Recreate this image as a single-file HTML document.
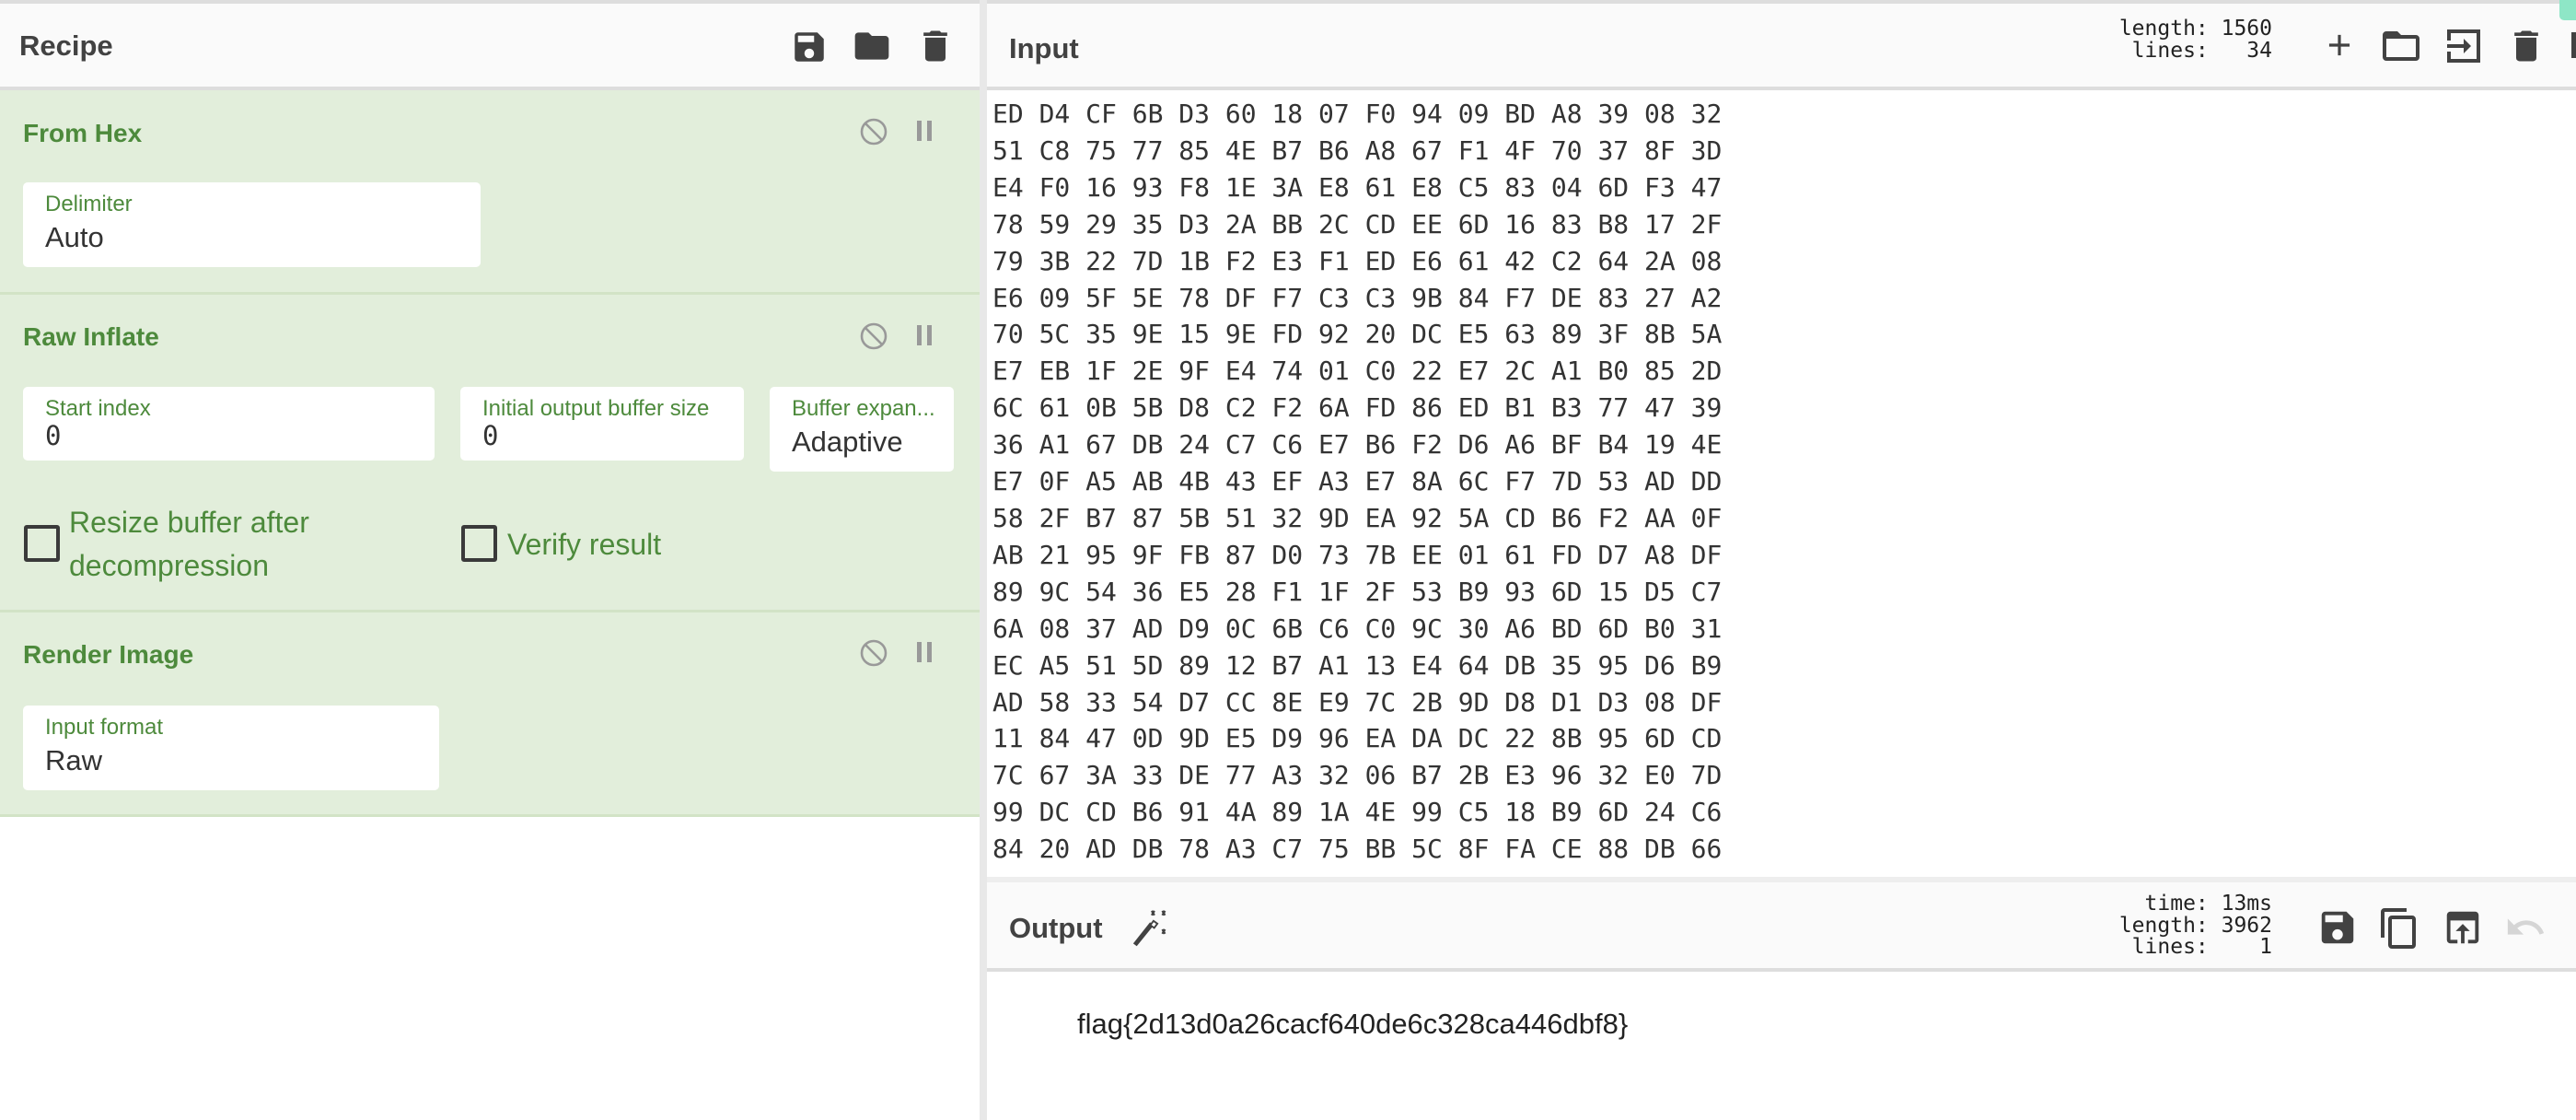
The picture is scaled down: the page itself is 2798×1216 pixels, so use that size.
<!DOCTYPE html>
<html><head><meta charset="utf-8">
<style>
*{margin:0;padding:0;box-sizing:border-box}
body{width:2798px;height:1216px;position:relative;overflow:hidden;background:#fff;font-family:"Liberation Sans",sans-serif;color:#424242}
.a{position:absolute}
.hdr{background:#fafafa;border-top:4px solid #ddd;border-bottom:4px solid #ddd}
.title{font-weight:bold;font-size:31px;color:#424242}
.green{background:#e2eedb}
.sec{border-bottom:3px solid #d2e3c6}
.stitle{font-weight:bold;font-size:28px;color:#4d8a3c}
.box{background:#fff;border-radius:5px}
.lbl{font-size:24px;color:#4d8a3c;position:absolute;left:24px;top:10px;white-space:nowrap}
.val{font-size:31px;color:#333;position:absolute;left:24px;top:42px}
.mono{font-family:"DejaVu Sans Mono","Liberation Mono",monospace}
.hex{font-size:28px;line-height:39.9px;color:#333;white-space:pre}
.stat{font-size:23px;line-height:23.5px;text-align:right;white-space:pre;color:#222}
svg.i{position:absolute;fill:#424242}
</style></head><body>

<!-- left panel -->
<div class="a hdr" style="left:0;top:0;width:1064px;height:98px"></div>
<div class="a title" style="left:21px;top:32px">Recipe</div>
<svg class="i" viewBox="0 0 24 24" style="left:858px;top:30px;width:42px;height:42px"><path d="M17 3H5a2 2 0 0 0-2 2v14a2 2 0 0 0 2 2h14a2 2 0 0 0 2-2V7l-4-4zm-5 16a3 3 0 1 1 0-6 3 3 0 0 1 0 6zm3-10H5V5h10v4z"/></svg>
<svg class="i" viewBox="0 0 24 24" style="left:925px;top:28px;width:44px;height:44px"><path d="M10 4H4a2 2 0 0 0-2 2v12a2 2 0 0 0 2 2h16a2 2 0 0 0 2-2V8a2 2 0 0 0-2-2h-8l-2-2z"/></svg>
<svg class="i" viewBox="0 0 24 24" style="left:994px;top:28px;width:44px;height:44px"><path d="M6 19a2 2 0 0 0 2 2h8a2 2 0 0 0 2-2V7H6v12zM19 4h-3.5l-1-1h-5l-1 1H5v2h14V4z"/></svg>

<div class="a green sec" style="left:0;top:98px;width:1064px;height:222px"></div>
<div class="a stitle" style="left:25px;top:129px">From Hex</div>
<div class="a box" style="left:25px;top:198px;width:497px;height:92px"><div class="lbl">Delimiter</div><div class="val">Auto</div></div>

<div class="a green sec" style="left:0;top:320px;width:1064px;height:345px"></div>
<div class="a stitle" style="left:25px;top:350px">Raw Inflate</div>
<div class="a box" style="left:25px;top:420px;width:447px;height:80px"><div class="lbl">Start index</div><div class="val mono" style="font-size:29px;top:36px">0</div></div>
<div class="a box" style="left:500px;top:420px;width:308px;height:80px"><div class="lbl">Initial output buffer size</div><div class="val mono" style="font-size:29px;top:36px">0</div></div>
<div class="a box" style="left:836px;top:420px;width:200px;height:92px"><div class="lbl">Buffer expan...</div><div class="val">Adaptive</div></div>
<div class="a" style="left:26px;top:570px;width:39px;height:40px;border:4px solid #3a3a3a;border-radius:3px"></div>
<div class="a" style="left:75px;top:544px;font-size:32px;line-height:47px;color:#4d8a3c">Resize buffer after<br>decompression</div>
<div class="a" style="left:501px;top:570px;width:39px;height:40px;border:4px solid #3a3a3a;border-radius:3px"></div>
<div class="a" style="left:551px;top:568px;font-size:32px;line-height:47px;color:#4d8a3c">Verify result</div>

<div class="a green sec" style="left:0;top:665px;width:1064px;height:222px"></div>
<div class="a stitle" style="left:25px;top:695px">Render Image</div>
<div class="a box" style="left:25px;top:766px;width:452px;height:92px"><div class="lbl">Input format</div><div class="val">Raw</div></div>

<!-- disable / pause icons -->
<svg class="a" viewBox="0 0 32 32" style="left:933px;top:126px;width:32px;height:34px" fill="none" stroke="#999" stroke-width="2.6"><circle cx="16" cy="16" r="13"/><path d="M7 7l18 18"/></svg>
<div class="a" style="left:996px;top:131px;width:5px;height:22px;background:#999"></div><div class="a" style="left:1007px;top:131px;width:5px;height:22px;background:#999"></div>
<svg class="a" viewBox="0 0 32 32" style="left:933px;top:348px;width:32px;height:34px" fill="none" stroke="#999" stroke-width="2.6"><circle cx="16" cy="16" r="13"/><path d="M7 7l18 18"/></svg>
<div class="a" style="left:996px;top:353px;width:5px;height:22px;background:#999"></div><div class="a" style="left:1007px;top:353px;width:5px;height:22px;background:#999"></div>
<svg class="a" viewBox="0 0 32 32" style="left:933px;top:692px;width:32px;height:34px" fill="none" stroke="#999" stroke-width="2.6"><circle cx="16" cy="16" r="13"/><path d="M7 7l18 18"/></svg>
<div class="a" style="left:996px;top:697px;width:5px;height:22px;background:#999"></div><div class="a" style="left:1007px;top:697px;width:5px;height:22px;background:#999"></div>

<!-- divider -->
<div class="a" style="left:1064px;top:0;width:8px;height:1216px;background:#e8e8e8"></div>

<!-- input -->
<div class="a hdr" style="left:1072px;top:0;width:1726px;height:98px"></div>
<div class="a title" style="left:1096px;top:35px">Input</div>
<div class="a stat mono" style="left:2200px;top:20px;width:268px">length: 1560
 lines:   34</div>
<svg class="i" viewBox="0 0 24 24" style="left:2522px;top:30px;width:38px;height:38px"><path d="M19 13h-6v6h-2v-6H5v-2h6V5h2v6h6v2z"/></svg>
<svg class="i" viewBox="0 0 24 24" style="left:2584px;top:26px;width:48px;height:48px"><path d="M20 6h-8l-2-2H4a2 2 0 0 0-2 2v12a2 2 0 0 0 2 2h16a2 2 0 0 0 2-2V8a2 2 0 0 0-2-2zm0 12H4V8h16v10z"/></svg>
<svg class="i" viewBox="0 0 24 24" style="left:2652px;top:26px;width:48px;height:48px"><path d="M3 3h18v18H3v-6h2v4h14V5H5v4H3zM3 11h9V8l4 4-4 4v-3H3z"/></svg>
<svg class="i" viewBox="0 0 24 24" style="left:2722px;top:28px;width:44px;height:44px"><path d="M6 19a2 2 0 0 0 2 2h8a2 2 0 0 0 2-2V7H6v12zM19 4h-3.5l-1-1h-5l-1 1H5v2h14V4z"/></svg>
<div class="a" style="left:2793px;top:35px;width:5px;height:28px;background:#424242"></div>
<div class="a" style="left:2780px;top:0;width:18px;height:22px;background:#8ee6c6;border-radius:0 0 0 5px"></div>

<div class="a hex mono" style="left:1078px;top:104px">ED D4 CF 6B D3 60 18 07 F0 94 09 BD A8 39 08 32
51 C8 75 77 85 4E B7 B6 A8 67 F1 4F 70 37 8F 3D
E4 F0 16 93 F8 1E 3A E8 61 E8 C5 83 04 6D F3 47
78 59 29 35 D3 2A BB 2C CD EE 6D 16 83 B8 17 2F
79 3B 22 7D 1B F2 E3 F1 ED E6 61 42 C2 64 2A 08
E6 09 5F 5E 78 DF F7 C3 C3 9B 84 F7 DE 83 27 A2
70 5C 35 9E 15 9E FD 92 20 DC E5 63 89 3F 8B 5A
E7 EB 1F 2E 9F E4 74 01 C0 22 E7 2C A1 B0 85 2D
6C 61 0B 5B D8 C2 F2 6A FD 86 ED B1 B3 77 47 39
36 A1 67 DB 24 C7 C6 E7 B6 F2 D6 A6 BF B4 19 4E
E7 0F A5 AB 4B 43 EF A3 E7 8A 6C F7 7D 53 AD DD
58 2F B7 87 5B 51 32 9D EA 92 5A CD B6 F2 AA 0F
AB 21 95 9F FB 87 D0 73 7B EE 01 61 FD D7 A8 DF
89 9C 54 36 E5 28 F1 1F 2F 53 B9 93 6D 15 D5 C7
6A 08 37 AD D9 0C 6B C6 C0 9C 30 A6 BD 6D B0 31
EC A5 51 5D 89 12 B7 A1 13 E4 64 DB 35 95 D6 B9
AD 58 33 54 D7 CC 8E E9 7C 2B 9D D8 D1 D3 08 DF
11 84 47 0D 9D E5 D9 96 EA DA DC 22 8B 95 6D CD
7C 67 3A 33 DE 77 A3 32 06 B7 2B E3 96 32 E0 7D
99 DC CD B6 91 4A 89 1A 4E 99 C5 18 B9 6D 24 C6
84 20 AD DB 78 A3 C7 75 BB 5C 8F FA CE 88 DB 66</div>

<!-- output -->
<div class="a" style="left:1072px;top:952px;width:1726px;height:10px;background:#eee"></div>
<div class="a hdr" style="left:1072px;top:958px;width:1726px;height:97px;border-top:none"></div>
<div class="a title" style="left:1096px;top:990px">Output</div>
<svg class="a" viewBox="0 0 24 24" style="left:1228px;top:986px;width:46px;height:46px"><path d="M3.5 21.5l-2-1.5 9.5-12 2.2 1.6z" fill="#424242"/><path d="M11.2 9.6l1.8-2.4 2.2 1.6-1.8 2.4z" fill="#fff" stroke="#424242" stroke-width="1"/><path d="M12 1.5l1.5 2.5M13.5 1.5L12 4M18 1.5l1.5 2.5M19.5 1.5L18 4M18 12l1.5 2.5M19.5 12L18 14.5" stroke="#424242" stroke-width="1.2" fill="none"/></svg>
<div class="a stat mono" style="left:2200px;top:970px;width:268px">  time: 13ms
length: 3962
 lines:    1</div>
<svg class="i" viewBox="0 0 24 24" style="left:2516px;top:984px;width:46px;height:46px"><path d="M17 3H5a2 2 0 0 0-2 2v14a2 2 0 0 0 2 2h14a2 2 0 0 0 2-2V7l-4-4zm-5 16a3 3 0 1 1 0-6 3 3 0 0 1 0 6zm3-10H5V5h10v4z"/></svg>
<svg class="i" viewBox="0 0 24 24" style="left:2582px;top:984px;width:48px;height:48px"><path d="M16 1H4a2 2 0 0 0-2 2v14h2V3h12V1zm3 4H8a2 2 0 0 0-2 2v14a2 2 0 0 0 2 2h11a2 2 0 0 0 2-2V7a2 2 0 0 0-2-2zm0 16H8V7h11v14z"/></svg>
<svg class="i" viewBox="0 0 24 24" style="left:2652px;top:984px;width:46px;height:46px"><path d="M19 3H5a2 2 0 0 0-2 2v14a2 2 0 0 0 2 2h4v-2H5V8h14v11h-4v2h4a2 2 0 0 0 2-2V5a2 2 0 0 0-2-2zm-7 7l-4 4h3v7h2v-7h3z"/></svg>
<svg class="a" viewBox="0 0 24 24" style="left:2720px;top:984px;width:46px;height:46px"><path d="M12.5 8c-2.65 0-5.05 1-6.9 2.6L2 7v9h9l-3.6-3.6c1.4-1.2 3.2-1.9 5.1-1.9 3.5 0 6.5 2.3 7.6 5.5l2.4-.8C21.1 11 17.2 8 12.5 8z" fill="#d5d5d5"/></svg>

<div class="a" style="left:1170px;top:1094px;font-size:31px;color:#222;letter-spacing:0">flag{2d13d0a26cacf640de6c328ca446dbf8}</div>
</body></html>
